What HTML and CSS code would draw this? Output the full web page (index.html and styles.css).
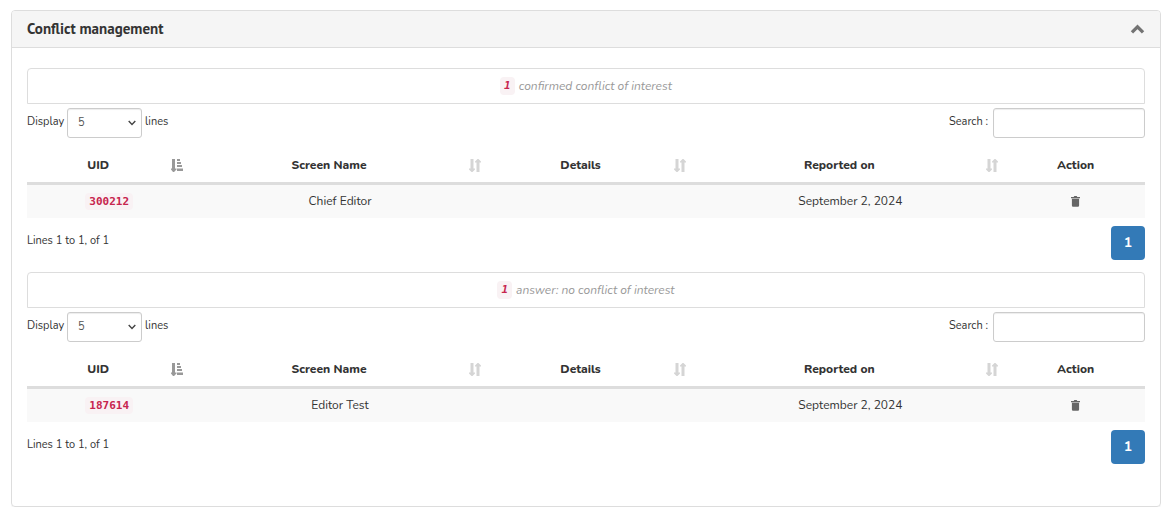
FILE: index.html
```html
<!DOCTYPE html>
<html lang="en">
<head>
<meta charset="utf-8">
<meta name="viewport" content="width=device-width, initial-scale=1">
<title>Conflict management</title>
<link rel="stylesheet" href="styles.css">
</head>
<body>
<svg class="sprite" aria-hidden="true">
  <symbol id="sort" viewBox="0 0 12 13"><path d="M1.500 0h3v9.500h1.500v1L3.500 13h-1L0 10.500v-1h1.500zM7.500 13h3V3.500H12v-1L9.500 0h-1L6 2.500v1h1.500z"/></symbol>
  <symbol id="sorted" viewBox="0 0 12 13"><path d="M1 0h3v9.500h1.500v1L3 13H2L0 10.500v-1h1zM6 0h3v2H6zM6 3h4v2H6zM6 6h5v2H6zM6 9.500h6v2.500H6z"/></symbol>
  <symbol id="trash" viewBox="0 0 10 12"><path d="M0 1h3l.7-1h2.600L7 1h3v1.300H0zM1 3h8v7.500a1.300 1.300 0 0 1-1.300 1.300H2.300A1.300 1.300 0 0 1 1 10.500z"/></symbol>
</svg>
<main class="panel">
  <header class="panel-heading">
    <h1 class="panel-title">Conflict management</h1>
    <button class="icon-button" type="button" aria-label="Collapse panel"><svg class="chevron" viewBox="0 0 13 9"><path d="M1.500 7.500l5-5 5 5"/></svg></button>
  </header>
  <div class="panel-body">
    <section class="report">
      <p class="caption"><code class="code">1</code> <span>confirmed conflict of interest</span></p>
      <div class="toolbar">
        <label class="field">Display <select class="control length"><option>5</option><option>10</option></select> lines</label>
        <label class="field search-field">Search : <input class="control search" type="search"></label>
      </div>
      <table class="grid">
        <colgroup><col class="col-uid"><col class="col-name"><col class="col-details"><col class="col-date"><col></colgroup>
        <thead><tr>
          <th><div class="head">UID<svg class="sort sort-active"><use href="#sorted"/></svg></div></th>
          <th><div class="head">Screen Name<svg class="sort"><use href="#sort"/></svg></div></th>
          <th><div class="head">Details<svg class="sort"><use href="#sort"/></svg></div></th>
          <th><div class="head">Reported on<svg class="sort"><use href="#sort"/></svg></div></th>
          <th>Action</th>
        </tr></thead>
        <tbody><tr>
          <td><code class="code">300212</code></td><td>Chief Editor</td><td></td><td>September 2, 2024</td>
          <td><button class="icon-button" type="button" aria-label="Delete"><svg class="trash"><use href="#trash"/></svg></button></td>
        </tr></tbody>
      </table>
      <footer class="table-footer"><span>Lines 1 to 1, of 1</span><a class="page" href="#">1</a></footer>
    </section>
    <section class="report">
      <p class="caption"><code class="code">1</code> <span>answer: no conflict of interest</span></p>
      <div class="toolbar">
        <label class="field">Display <select class="control length"><option>5</option><option>10</option></select> lines</label>
        <label class="field search-field">Search : <input class="control search" type="search"></label>
      </div>
      <table class="grid">
        <colgroup><col class="col-uid"><col class="col-name"><col class="col-details"><col class="col-date"><col></colgroup>
        <thead><tr>
          <th><div class="head">UID<svg class="sort sort-active"><use href="#sorted"/></svg></div></th>
          <th><div class="head">Screen Name<svg class="sort"><use href="#sort"/></svg></div></th>
          <th><div class="head">Details<svg class="sort"><use href="#sort"/></svg></div></th>
          <th><div class="head">Reported on<svg class="sort"><use href="#sort"/></svg></div></th>
          <th>Action</th>
        </tr></thead>
        <tbody><tr>
          <td><code class="code">187614</code></td><td>Editor Test</td><td></td><td>September 2, 2024</td>
          <td><button class="icon-button" type="button" aria-label="Delete"><svg class="trash"><use href="#trash"/></svg></button></td>
        </tr></tbody>
      </table>
      <footer class="table-footer"><span>Lines 1 to 1, of 1</span><a class="page" href="#">1</a></footer>
    </section>
  </div>
</main>
</body>
</html>
```
FILE: styles.css
```css
* { box-sizing: border-box; }
body {
  margin: 10px 9px 8px 11px;
  background: #fff;
  color: #333;
  font: 12px/18px "Nunito", "Noto Sans", sans-serif;
}
.sprite { display: none; }
.panel {
  border: 1px solid #ddd;
  border-radius: 4px;
  box-shadow: 0 1px 1px rgba(0, 0, 0, .05);
}
.panel-heading {
  display: flex;
  align-items: center;
  justify-content: space-between;
  padding: 9px 15px;
  background: #f5f5f5;
  border-bottom: 1px solid #ddd;
  border-radius: 3px 3px 0 0;
}
.panel-title {
  margin: 0;
  font: bold 15px/18px "PT Sans", "Open Sans", sans-serif;
}
.icon-button {
  display: inline-flex;
  padding: 0;
  border: 0;
  background: none;
  color: #666;
  cursor: pointer;
  vertical-align: middle;
}
.chevron {
  width: 15px;
  height: 10px;
  fill: none;
  stroke: #737373;
  stroke-width: 3;
}
.panel-body { padding: 20px 15px 42px; }
.report + .report { margin-top: 12px; }
.caption {
  display: flex;
  align-items: center;
  justify-content: center;
  gap: 4px;
  margin: 0 0 4px;
  padding: 8px 15px;
  border: 1px solid #ddd;
  border-radius: 4px 4px 0 0;
  color: #999;
  font-style: italic;
}
.code {
  padding: 2px 4px;
  border-radius: 4px;
  background: #f9f2f4;
  color: #c7254e;
  font: bold 11px/14px "DejaVu Sans Mono", monospace;
}
.caption .code { font-style: italic; }
.toolbar {
  display: flex;
  justify-content: space-between;
}
.field {
  display: flex;
  gap: 3px;
  font-size: 11px;
  line-height: 28px;
}
.search-field { gap: 5px; }
.control {
  height: 30px;
  border: 1px solid #ccc;
  border-radius: 3px;
  background: #fff;
  box-shadow: inset 0 1px 1px rgba(0, 0, 0, .075);
  color: #555;
  font: inherit;
}
.length {
  width: 75px;
  padding: 0 10px;
  appearance: none;
  background: #fff url("data:image/svg+xml,%3Csvg xmlns='http://www.w3.org/2000/svg' width='8' height='6' fill='none' stroke='%23444' stroke-width='1.4'%3E%3Cpath d='M.7 1L4 4.500 7.300 1'/%3E%3C/svg%3E") no-repeat right 5px center;
}
.search {
  width: 152px;
  padding: 5px 10px;
}
.grid {
  width: 100%;
  margin-top: 8px;
  table-layout: fixed;
  border-collapse: separate;
  border-spacing: 0;
  text-align: center;
}
.col-uid { width: 14.700%; }
.col-name { width: 26.600%; }
.col-details { width: 18.400%; }
.col-date { width: 27.900%; }
th {
  padding: 10px 8px 8px;
  border-bottom: 3px solid #ddd;
  font-weight: 800;
}
.head {
  position: relative;
  padding-right: 22px;
}
.sort {
  position: absolute;
  top: 3px;
  right: 0;
  width: 12px;
  height: 13px;
  fill: #d5d5d5;
}
.sort-active { fill: #999; }
td {
  height: 33px;
  padding: 0 8px 1px;
  background: #f9f9f9;
}
.trash {
  width: 9px;
  height: 11px;
  fill: #666;
}
td .icon-button { padding-bottom: 2px; }
.table-footer {
  display: flex;
  justify-content: space-between;
  padding-top: 8px;
  font-size: 11px;
  line-height: 30px;
}
.page {
  width: 34px;
  height: 34px;
  border-radius: 4px;
  background: #337ab7;
  color: #fff;
  font-size: 14px;
  font-weight: 700;
  line-height: 34px;
  text-align: center;
  text-decoration: none;
}
```
